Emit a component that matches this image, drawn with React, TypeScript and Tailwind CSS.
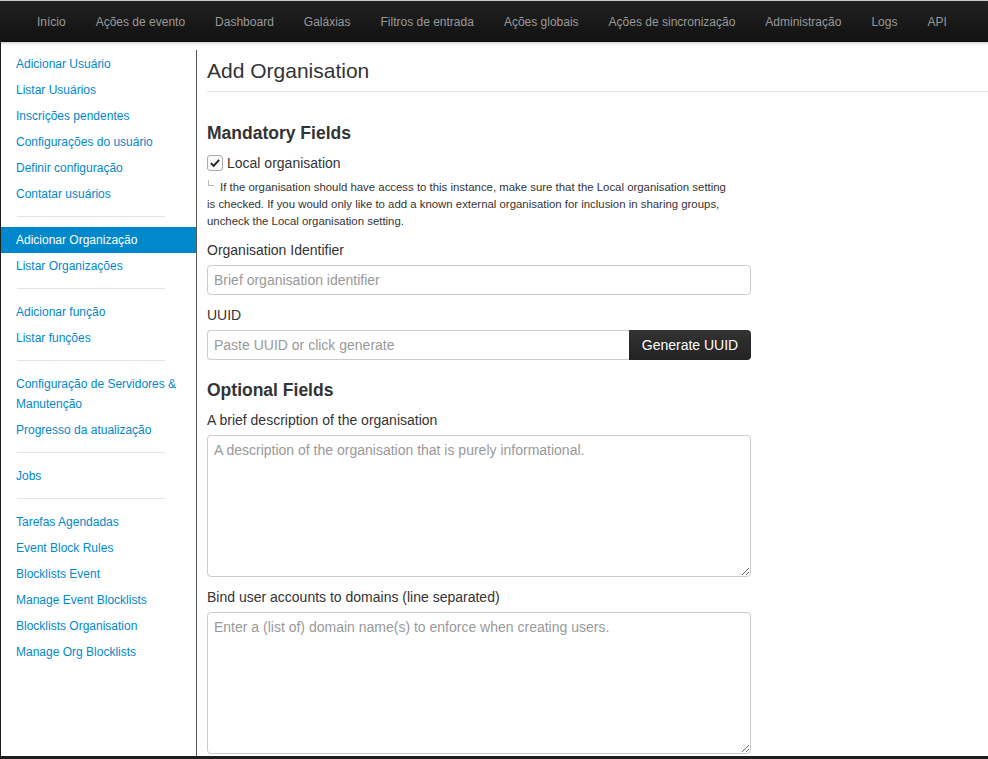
import React from "react";

const NAV_ITEMS = [
  "Início",
  "Ações de evento",
  "Dashboard",
  "Galáxias",
  "Filtros de entrada",
  "Ações globais",
  "Ações de sincronização",
  "Administração",
  "Logs",
  "API",
];

type SideEntry = { label: string; active?: boolean } | "divider";

const SIDE_ITEMS: SideEntry[] = [
  { label: "Adicionar Usuário" },
  { label: "Listar Usuários" },
  { label: "Inscrições pendentes" },
  { label: "Configurações do usuário" },
  { label: "Definir configuração" },
  { label: "Contatar usuários" },
  "divider",
  { label: "Adicionar Organização", active: true },
  { label: "Listar Organizações" },
  "divider",
  { label: "Adicionar função" },
  { label: "Listar funções" },
  "divider",
  { label: "Configuração de Servidores & Manutenção" },
  { label: "Progresso da atualização" },
  "divider",
  { label: "Jobs" },
  "divider",
  { label: "Tarefas Agendadas" },
  { label: "Event Block Rules" },
  { label: "Blocklists Event" },
  { label: "Manage Event Blocklists" },
  { label: "Blocklists Organisation" },
  { label: "Manage Org Blocklists" },
];

function CheckIcon(): React.ReactElement {
  return (
    <svg viewBox="0 0 16 16" className="h-[12px] w-[12px]">
      <path d="M2.5 8.2 L6.2 11.8 L13.5 3.8" fill="none" stroke="#222" strokeWidth="2.6" />
    </svg>
  );
}

function Sidebar(): React.ReactElement {
  return (
    <aside className="w-[196px] shrink-0 border-r border-[#555] pt-[1px]">
      <ul className="text-[12px] leading-[20px]">
        {SIDE_ITEMS.map((item, i) =>
          item === "divider" ? (
            <li key={i} className="mx-[16px] my-[9px] h-[2px] w-[148px] border-b border-white bg-[#e5e5e5]" />
          ) : (
            <li
              key={i}
              className={`px-[15px] py-[3px] ${
                item.active ? "bg-[#0088cc] text-white" : "text-[#0088cc]"
              }`}
            >
              {item.label}
            </li>
          )
        )}
      </ul>
    </aside>
  );
}

export default function App(): React.ReactElement {
  return (
    <div className="flex h-[759px] flex-col overflow-hidden bg-white font-['Liberation_Sans',Arial,sans-serif] text-[#333]">
      <div className="h-px shrink-0 bg-[#d6d3ce]" />
      {/* Top navbar */}
      <nav className="flex h-[41px] shrink-0 items-center bg-gradient-to-b from-[#222] to-[#111] pl-[22px] shadow-[0_1px_3px_rgba(0,0,0,0.25)]">
        {NAV_ITEMS.map((item) => (
          <span key={item} className="px-[15px] text-[12px] text-[#999]">
            {item}
          </span>
        ))}
      </nav>

      <div className="flex min-h-0 flex-1 border-l border-[#1e1e1e] pt-[8px]">
        <Sidebar />

        {/* Main form */}
        <main className="min-w-0 flex-1 pl-[10px]">
          <h2 className="pt-[7px] text-[21px] leading-[28px]">Add Organisation</h2>
          <hr className="mt-[6px] border-[#e5e5e5]" />

          <h3 className="mt-[26px] text-[17.5px] font-bold leading-[30px]">Mandatory Fields</h3>
          <div className="w-[544px]">
            <label className="mt-[5px] flex items-center gap-[4px] text-[14px] leading-[20px]">
              <span className="flex h-[16px] w-[16px] items-center justify-center rounded-[3px] border border-[#aaa] bg-[#f8f8f8]">
                <CheckIcon />
              </span>
              Local organisation
            </label>
            <p className="mt-[6px] w-[524px] text-[11.4px] leading-[17px]">
              <span className="mr-[6px] ml-[1px] inline-block h-[6px] w-[6px] -translate-y-[5px] border-b border-l border-[#bbb]" />
              If the organisation should have access to this instance, make sure that the Local organisation setting
              is checked. If you would only like to add a known external organisation for inclusion in sharing groups,
              uncheck the Local organisation setting.
            </p>

            <div className="mt-[10px] text-[14px] leading-[20px]">Organisation Identifier</div>
            <input
              className="mt-[5px] block h-[30px] w-[544px] rounded-[4px] border border-[#ccc] px-[6px] text-[14px] placeholder:text-[#999]"
              placeholder="Brief organisation identifier"
            />

            <div className="mt-[10px] text-[14px] leading-[20px]">UUID</div>
            <div className="mt-[5px] flex h-[30px] w-[544px]">
              <input
                className="h-full min-w-0 flex-1 rounded-l-[4px] border border-r-0 border-[#ccc] px-[6px] text-[14px] placeholder:text-[#999]"
                placeholder="Paste UUID or click generate"
              />
              <button className="h-full w-[122px] rounded-r-[4px] bg-gradient-to-b from-[#333] to-[#222] text-[14px] text-white">
                Generate UUID
              </button>
            </div>

            <h3 className="mt-[15px] text-[17.5px] font-bold leading-[30px]">Optional Fields</h3>
            <div className="mt-[5px] text-[14px] leading-[20px]">A brief description of the organisation</div>
            <textarea
              className="mt-[5px] block h-[142px] w-[544px] rounded-[4px] border border-[#ccc] px-[6px] py-[4px] text-[14px] leading-[20px] placeholder:text-[#999]"
              placeholder="A description of the organisation that is purely informational."
            />

            <div className="mt-[10px] text-[14px] leading-[20px]">Bind user accounts to domains (line separated)</div>
            <textarea
              className="mt-[5px] block h-[142px] w-[544px] rounded-[4px] border border-[#ccc] px-[6px] py-[4px] text-[14px] leading-[20px] placeholder:text-[#999]"
              placeholder="Enter a (list of) domain name(s) to enforce when creating users."
            />
          </div>
        </main>
      </div>
      <div className="h-[3px] shrink-0 bg-[#1e1e1e]" />
    </div>
  );
}
